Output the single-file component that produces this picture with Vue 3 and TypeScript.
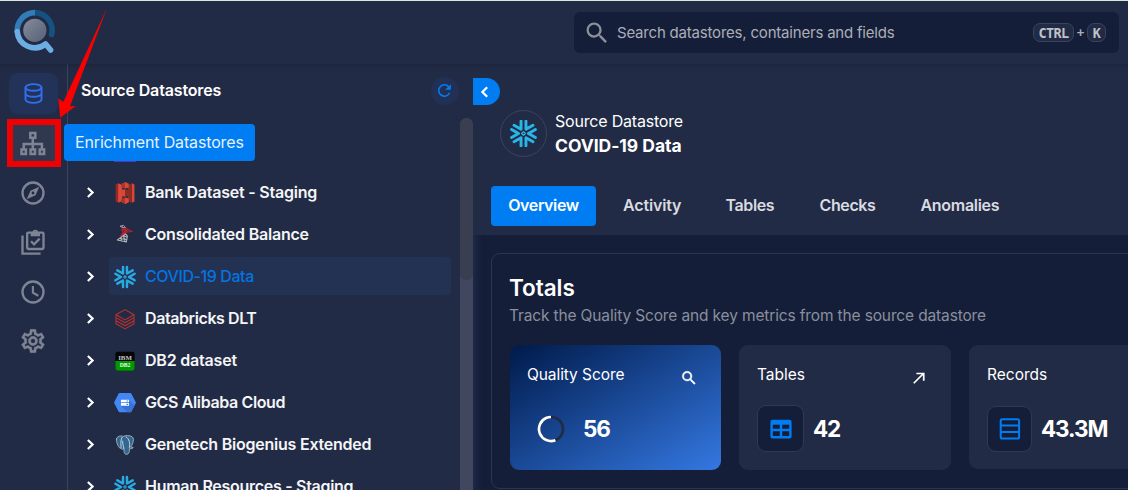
<script setup lang="ts">
type Brand = 'hidden' | 's3' | 'mssql' | 'snowflake' | 'databricks' | 'db2' | 'gcs' | 'postgres'

interface Datastore {
  name: string
  icon: Brand
  key: string
  active?: boolean
}

const datastores: Datastore[] = [
  { name: '', icon: 'hidden', key: 'first' },
  { name: 'Bank Dataset - Staging', icon: 's3', key: 'bank' },
  { name: 'Consolidated Balance', icon: 'mssql', key: 'balance' },
  { name: 'COVID-19 Data', icon: 'snowflake', key: 'covid', active: true },
  { name: 'Databricks DLT', icon: 'databricks', key: 'dlt' },
  { name: 'DB2 dataset', icon: 'db2', key: 'db2' },
  { name: 'GCS Alibaba Cloud', icon: 'gcs', key: 'gcs' },
  { name: 'Genetech Biogenius Extended', icon: 'postgres', key: 'genetech' },
  { name: 'Human Resources - Staging', icon: 'snowflake', key: 'hr' },
]

const tabs = ['Overview', 'Activity', 'Tables', 'Checks', 'Anomalies']
const petals = [0, 60, 120, 180, 240, 300]
const magnify =
  'M9.5 3A6.5 6.5 0 0 1 16 9.5c0 1.61-.59 3.09-1.56 4.23l.27.27h.79l5 5-1.5 1.5-5-5v-.79l-.27-.27A6.516 6.516 0 0 1 9.5 16 6.5 6.5 0 0 1 3 9.5 6.5 6.5 0 0 1 9.5 3m0 2C7 5 5 7 5 9.5S7 14 9.5 14 14 12 14 9.5 12 5 9.5 5z'
const cog =
  'M12 8a4 4 0 0 1 4 4 4 4 0 0 1-4 4 4 4 0 0 1-4-4 4 4 0 0 1 4-4m0 2a2 2 0 0 0-2 2 2 2 0 0 0 2 2 2 2 0 0 0 2-2 2 2 0 0 0-2-2m-2 12c-.25 0-.46-.18-.5-.42l-.37-2.65c-.63-.25-1.17-.59-1.69-.99l-2.49 1.01c-.22.08-.49 0-.61-.22l-2-3.46a.493.493 0 0 1 .12-.64l2.11-1.66L4.5 12l.07-1-2.11-1.63a.493.493 0 0 1-.12-.64l2-3.46c.12-.22.39-.31.61-.22l2.49 1c.52-.39 1.06-.73 1.69-.98l.37-2.65c.04-.24.25-.42.5-.42h4c.25 0 .46.18.5.42l.37 2.65c.63.25 1.17.59 1.69.98l2.49-1c.22-.09.49 0 .61.22l2 3.46c.13.22.07.49-.12.64L19.43 11l.07 1-.07 1 2.11 1.63c.19.15.25.42.12.64l-2 3.46c-.12.22-.39.31-.61.22l-2.49-1c-.52.39-1.06.73-1.69.98l-.37 2.65c-.04.24-.25.42-.5.42h-4m1.25-18l-.37 2.61c-1.2.25-2.26.89-3.03 1.78L5.44 7.35l-.75 1.3L6.8 10.2a5.55 5.55 0 0 0 0 3.6l-2.12 1.56.75 1.3 2.43-1.04c.77.88 1.82 1.52 3.01 1.76l.37 2.62h1.52l.37-2.61c1.19-.25 2.24-.89 3.01-1.77l2.43 1.04.75-1.3-2.12-1.55c.4-1.17.4-2.44 0-3.61l2.11-1.55-.75-1.3-2.41 1.04a5.42 5.42 0 0 0-3.03-1.77L12.75 4h-1.5z'
</script>

<template>
  <div class="app">
    <header class="topbar">
      <svg class="logo" viewBox="0 0 44 44" fill="none" stroke-width="5.6">
        <defs>
          <linearGradient id="disc" x1="0" y1="0" x2="1" y2="1">
            <stop offset="0" stop-color="#858b9a" />
            <stop offset="1" stop-color="#566076" />
          </linearGradient>
        </defs>
        <path d="M38.6 25.5A17.6 17.6 0 0 0 21.5 3.6" stroke="#15527f" stroke-linecap="round" />
        <path d="M22 3.6A17.6 17.6 0 0 0 4.4 23" stroke="#327cb7" />
        <path d="M4.2 22.5A17.6 17.6 0 0 0 32.6 35L37.6 41" stroke="#6cade3" stroke-linecap="round" stroke-linejoin="round" />
        <circle cx="21.8" cy="21.3" r="11.6" fill="url(#disc)" />
      </svg>
      <div class="search">
        <svg class="search-icon" viewBox="0 0 24 24"><path :d="magnify" fill="currentColor" /></svg>
        <span class="placeholder">Search datastores, containers and fields</span>
        <span class="keys"><kbd class="ctrl">CTRL</kbd><i class="plus">+</i><kbd class="k">K</kbd></span>
      </div>
    </header>

    <div class="body">
      <nav class="rail">
        <div class="rail-item current">
          <svg viewBox="0 0 24 24" fill="none" stroke="currentColor" stroke-width="1.9">
            <ellipse cx="12" cy="6.2" rx="7.7" ry="3.2" />
            <path d="M4.3 6.2v11.6c0 1.8 3.4 3.2 7.7 3.2s7.7-1.4 7.7-3.2V6.2M4.3 12c0 1.8 3.4 3.2 7.7 3.2s7.7-1.4 7.7-3.2" />
          </svg>
        </div>
        <div class="rail-item marked">
          <svg viewBox="0 0 28 28" fill="none" stroke="currentColor" stroke-width="2.5">
            <path d="M11.3 3.9h5v4.8h-5zM2.5 20.4h4.4v4.5H2.5zM11.6 20.4H16v4.5h-4.4zM20.7 20.4h4.4v4.5h-4.4zM13.8 9v11.5M4.7 20.5v-5.4h18.2v5.4" />
          </svg>
        </div>
        <div class="rail-item">
          <svg viewBox="0 0 24 24">
            <circle cx="12" cy="12" r="9" fill="none" stroke="currentColor" stroke-width="2" />
            <path fill="currentColor" fill-rule="evenodd" d="M6.6 17.4l3.2-7.3 7.6-3.5-3.2 7.3zM12 10.8a1.2 1.2 0 1 0 0 2.4 1.2 1.2 0 0 0 0-2.4z" />
          </svg>
        </div>
        <div class="rail-item">
          <svg viewBox="0 0 24 24" fill="none" stroke="currentColor" stroke-width="2">
            <rect x="7" y="4" width="14" height="14" rx="1" />
            <path d="M3 6.5V22h15.5" />
            <path d="M10 5.6h8" stroke-width="3" />
            <circle cx="14" cy="3.8" r="1.6" stroke-width="1.6" />
            <path d="M10.3 11.4l2.6 2.6 4.8-4.9" />
          </svg>
        </div>
        <div class="rail-item">
          <svg viewBox="0 0 24 24" fill="none" stroke="currentColor" stroke-width="2">
            <circle cx="12" cy="12" r="9" />
            <path d="M11.9 6.8v5.7l4.6 2.7" stroke-width="1.8" />
          </svg>
        </div>
        <div class="rail-item">
          <svg viewBox="0 0 24 24"><path :d="cog" fill="currentColor" stroke="currentColor" stroke-width=".3" /></svg>
        </div>
      </nav>

      <aside class="panel">
        <div class="panel-head">
          <span class="panel-title">Source Datastores</span>
          <span class="refresh">
            <svg viewBox="0 0 24 24" fill="none" stroke="currentColor" stroke-width="2.2">
              <path d="M19.2 15.2A8 8 0 1 1 18 6.8" />
              <path d="M20.9 3v8h-8z" fill="currentColor" stroke="none" />
            </svg>
          </span>
        </div>
        <div class="panel-body">
          <ul class="stores">
            <li v-for="d in datastores" :key="d.key" class="store">
              <svg v-if="d.icon !== 'hidden'" class="chev" viewBox="0 0 10 10" fill="none" stroke="currentColor" stroke-width="2"><path d="M2.6 .9L6.9 5 2.6 9.1" /></svg>
              <span v-else class="chev"></span>
              <div :class="['entry', d.key, { active: d.active }]">
                <svg class="brand" viewBox="-12 -12 24 24">
                  <rect v-if="d.icon === 'hidden'" x="-12" y="-12" width="24" height="24" fill="#5433c9" />
                  <g v-else-if="d.icon === 'snowflake'" fill="none" stroke="#29abe2" stroke-linecap="round" stroke-linejoin="round">
                    <path v-for="a in petals" :key="a" d="M10.5 -3.6L4.4 0L10.5 3.6" stroke-width="2.7" :transform="`rotate(${a})`" />
                    <path d="M0 -1.6L1.6 0L0 1.6L-1.6 0Z" stroke-width="1.1" />
                  </g>
                  <g v-else-if="d.icon === 's3'">
                    <path d="M-10.3 -9.2L-7.5 -10.6V10.6L-10.3 9.2Z" fill="#8c2c22" />
                    <path d="M-7.5 -10.6L-3 -8.6V8.6L-7.5 10.6Z" fill="#e0483a" />
                    <path d="M10.3 -9.2L7.5 -10.6V10.6L10.3 9.2Z" fill="#d9463a" />
                    <path d="M7.5 -10.6L3 -8.6V8.6L7.5 10.6Z" fill="#8c2c22" />
                    <path d="M0 -12L4 -10V-6L0 -5L-4 -6V-10Z" fill="#a8362b" />
                    <path d="M0 12L4 10V6L0 5L-4 6V10Z" fill="#a8362b" />
                    <path d="M-4 -3.4L0 -4V4L-4 3.4Z" fill="#d9463a" />
                    <path d="M0 -12L4 -10V-6L0 -5Z" fill="#d9463a" />
                    <path d="M0 -4L4 -3.4V3.4L0 4Z" fill="#8c2c22" />
                    <path d="M0 5L4 6V10L0 12Z" fill="#e0483a" />
                  </g>
                  <g v-else-if="d.icon === 'mssql'" fill="none" stroke-linejoin="round">
                    <path d="M-5.5 -9.6L-1.6 -10.6L.6 -7.8L-3 -8.3ZM-3.4 -10L-2.4 -7.8" stroke="#a9aab2" stroke-width=".9" />
                    <path d="M-3.6 -6.6L1 -7L7.8 -3.8L1.3 -3L-5.4 2.4L-2.4 -2.6ZM-1 -6.4L2.8 -3.2M3.4 -5.8L-2.2 -2M1.2 -6.6L-3.8 .8M-3 -6.4L1 -3" stroke="#b0232c" stroke-width="1.2" />
                    <path d="M-4 2.4L.6 -1.2L2.6 1L1.6 7.6L-8.4 5.4ZM-6 3.8L2 5M-1.8 .6L.2 7.4M-4 2.6L-4.2 6.3M-1.8 .6L2.2 2.4" stroke="#b4b6be" stroke-width="1.1" />
                  </g>
                  <g v-else-if="d.icon === 'databricks'" fill="none" stroke="#c0312b" stroke-width="1.15" stroke-linejoin="round">
                    <path d="M-9.8 -4.7L0 -10.2L9.8 -4.7L0 1Z" />
                    <path d="M-9.8 -4.7V-1.5L0 4L9.8 -1.5V-4.7M-9.8 -1.3V2L0 7.3L9.8 2V-1.3M-9.8 2V5.2L0 10.8L9.8 5.2V2" />
                  </g>
                  <g v-else-if="d.icon === 'db2'">
                    <rect x="-10.5" y="-10" width="21" height="20.5" rx="2.6" fill="#050505" />
                    <path d="M-10.5 0H10.5V7.9A2.6 2.6 0 0 1 7.9 10.5H-7.9A2.6 2.6 0 0 1 -10.5 7.9Z" fill="#009a00" />
                    <text x="0" y="-1.5" class="ibm">IBM</text>
                    <text x="0" y="7" class="db">DB2</text>
                  </g>
                  <g v-else-if="d.icon === 'gcs'">
                    <path d="M-6 -10.8H6Q6.6 -10.8 7 -10L11.7 -1Q12 -.4 11.7 .2L7 9.2Q6.6 10 6 10H-6Q-6.6 10 -7 9.2L-11.7 .2Q-12 -.4 -11.7 -1L-7 -10Q-6.6 -10.8 -6 -10.8Z" fill="#4386f5" />
                    <path d="M4.4 -3.4L10.4 2.6L7 9.2Q6.6 10 6 10H2.4L-4.4 3Z" fill="#3a72d6" />
                    <path d="M-4.4 -3.5H4.4V-.7H-4.4ZM-4.4 .1H4.4V2.9H-4.4Z" fill="#fff" />
                    <path d="M1.6 -2.1H3.4M1.6 1.5H3.4" stroke="#4386f5" stroke-width="1.1" />
                  </g>
                  <g v-else stroke-linejoin="round" stroke-linecap="round">
                    <path d="M-9.3 -6.5C-8.8 -10 -4.5 -10.4 -2 -9.4C1 -10.8 9 -11 9.2 -6.2C9.2 -3 7.6 .6 6.2 2.2L9 2.7C7.8 4.4 5.4 4.2 4.8 4C4.9 7.4 4.4 10 1.8 10.2C-.8 10.4 -1.2 7.4 -1.1 4.2C-3 5.2 -4.2 4.4 -4.4 3.6C-6.6 4.6 -9.8 -3 -9.3 -6.5Z" fill="#336791" stroke="#aebac6" stroke-width=".9" />
                    <path d="M-3.2 -8.4C-5 -5 -4.6 -1.4 -4.2 3M1.2 -8.8C4.6 -7 5.8 -1.8 4.8 2.6M-1.2 3.8C-1.6 .8 -2.8 -1.2 -2.6 -4.2" fill="none" stroke="#dfe6ec" stroke-width=".9" />
                  </g>
                </svg>
                <span class="name">{{ d.name }}</span>
              </div>
            </li>
          </ul>
          <div class="track"><div class="thumb"></div></div>
        </div>
      </aside>

      <main class="main">
        <section class="hero">
          <div class="ident">
            <div class="avatar">
              <svg viewBox="-12 -12 24 24" fill="none" stroke="#29b5e8" stroke-linecap="round" stroke-linejoin="round">
                <path v-for="a in petals" :key="a" d="M10.6 -3.6L4.4 0L10.6 3.6" stroke-width="2.6" :transform="`rotate(${a})`" />
                <path d="M0 -1.7L1.7 0L0 1.7L-1.7 0Z" stroke-width="1.1" />
              </svg>
            </div>
            <div class="ident-text">
              <span class="kind">Source Datastore</span>
              <span class="title">COVID-19 Data</span>
            </div>
          </div>
          <div class="tabs">
            <div v-for="(t, i) in tabs" :key="t" :class="['tab', t.toLowerCase(), { on: i === 0 }]"><span>{{ t }}</span></div>
          </div>
        </section>
        <section class="totals">
          <h2>Totals</h2>
          <p>Track the Quality Score and key metrics from the source datastore</p>
          <div class="cards">
            <div class="card score">
              <div class="card-head">
                <span class="l-score">Quality Score</span>
                <svg class="corner" viewBox="0 0 24 24"><path :d="magnify" fill="currentColor" stroke="currentColor" stroke-width=".5" /></svg>
              </div>
              <div class="card-row">
                <svg class="ring" viewBox="0 0 28 28" fill="none" stroke-width="2.7">
                  <circle cx="14" cy="14" r="12" stroke="#222b45" />
                  <circle cx="14" cy="14" r="12" stroke="#fff" pathLength="100" stroke-dasharray="56 44" transform="rotate(68.4 14 14)" />
                </svg>
                <b class="v-score">56</b>
              </div>
            </div>
            <div class="card">
              <div class="card-head">
                <span class="l-tables">Tables</span>
                <svg class="corner" viewBox="0 0 24 24" fill="none" stroke="currentColor" stroke-width="2.3"><path d="M5 19L18 6M8.5 6H18.3V15.5" /></svg>
              </div>
              <div class="card-row">
                <span class="tile">
                  <svg viewBox="0 0 22 20" fill="none" stroke="currentColor" stroke-width="2.4">
                    <rect x="1.6" y="2" width="18.8" height="16.2" rx="1" />
                    <path d="M1.6 3.5h18.8" stroke-width="4.4" />
                    <path d="M11 4v14M2 11h18.5" />
                  </svg>
                </span>
                <b class="v-tables">42</b>
              </div>
            </div>
            <div class="card records">
              <div class="card-head"><span class="l-records">Records</span></div>
              <div class="card-row">
                <span class="tile">
                  <svg viewBox="0 0 22 22" fill="none" stroke="currentColor" stroke-width="2">
                    <rect x="1.7" y="1.2" width="18.4" height="19.4" rx="1.6" />
                    <path d="M1.7 7.6h18.4M1.7 14.1h18.4" />
                  </svg>
                </span>
                <b class="v-records">43.3M</b>
              </div>
            </div>
          </div>
        </section>
      </main>
    </div>

    <div class="collapse">
      <svg viewBox="0 0 12 12" fill="none" stroke="currentColor" stroke-width="2.2"><path d="M8.2 1.2L3.4 6l4.8 4.8" /></svg>
    </div>
    <div class="tooltip">Enrichment Datastores</div>
    <div class="highlight"></div>
    <svg class="arrow" viewBox="0 0 120 125"><path d="M107 8L70 106.3L75.8 106L60.2 117.7L58.2 98.6L63.4 101.8Z" fill="#fb0000" /></svg>
  </div>
</template>

<style>
body { background: #151e39; }
</style>

<style scoped>
* { box-sizing: border-box; }
.app {
  position: relative; width: 1128px; height: 490px; overflow: hidden;
  background: #151e39; color: #fff; display: flex; flex-direction: column;
  font-family: Inter, "Noto Sans", sans-serif; font-size: 16px; white-space: nowrap;
}
svg { display: block; flex: none; }

.topbar {
  flex: none; height: 64px; border-top: 1px solid #dbe6df; background: #222b45;
  display: flex; justify-content: space-between; padding: 8px 9px 0 13px;
  position: relative; z-index: 2; box-shadow: 0 1px 5px rgba(15, 20, 35, .35);
}
.logo { width: 44px; height: 44px; }
.search {
  margin-top: 3px; width: 545px; height: 41px; border-radius: 6px; background: #151e39;
  display: flex; align-items: center; padding: 0 13px 0 9px; color: #abaeb7;
}
.search-icon { width: 28px; height: 28px; color: #8c909c; }
.placeholder { margin-left: 6px; font-size: 15px; letter-spacing: -.2px; flex: 1; }
.keys { display: flex; align-items: center; }
kbd {
  height: 19px; display: flex; align-items: center; justify-content: center;
  border: 1px solid #3b435b; border-radius: 7px; background: #222b45; color: #c0c2c9;
  font: bold 13.5px "DejaVu Sans Mono", monospace; letter-spacing: -.6px;
}
.ctrl { width: 41px; }
.k { width: 19px; }
.plus { width: 13px; text-align: center; font: bold 12.5px "DejaVu Sans Mono", monospace; }

.body { flex: 1; display: flex; min-height: 0; }
.rail {
  width: 68px; flex: none; background: #222b45; border-right: 1px solid #3b435b;
  padding: 9px 0 0 9px;
}
.rail-item { width: 49px; height: 41px; margin-bottom: 8.5px; display: flex; align-items: center; justify-content: center; color: #7e8494; }
.rail-item svg { width: 28px; height: 28px; margin-right: 1px; }
.rail-item.current { background: #223258; border-radius: 9px; color: #2f6fee; }
.rail-item.current svg { width: 25px; height: 25px; }
.rail-item.marked { background: #30384f; }

.panel { width: 405px; flex: none; background: #222b45; display: flex; flex-direction: column; }
.panel-head { flex: none; height: 54px; display: flex; justify-content: space-between; align-items: center; padding: 0 14px 0 13px; }
.panel-title { font-weight: 600; font-size: 16px; letter-spacing: -.15px; margin-top: -2px; }
.refresh { width: 28px; height: 28px; border-radius: 50%; background: #223055; color: #007df2; display: flex; align-items: center; justify-content: center; }
.refresh svg { width: 17px; height: 17px; margin: 0 1px 1px 0; }
.panel-body { flex: 1; min-height: 0; display: flex; justify-content: space-between; overflow: hidden; }
.stores { list-style: none; margin: 0; padding: 11px 0 0 16px; }
.store { display: flex; align-items: center; height: 42px; }
.chev { width: 13px; height: 11px; margin-right: 12px; flex: none; }
.entry { width: 342px; height: 38px; border-radius: 4px; display: flex; align-items: center; padding-left: 5px; color: #f4f5f7; }
.brand { width: 22px; height: 22px; overflow: visible; position: relative; top: 1px; }
.name { margin-left: 9px; font-weight: 600; font-size: 16px; letter-spacing: -.23px; }
.balance .name { letter-spacing: -.21px; }
.dlt .name { letter-spacing: -.41px; }
.db2 .name { letter-spacing: -.2px; }
.gcs .name { letter-spacing: -.37px; }
.hr .name { letter-spacing: -.29px; }
.entry.active { background: #233153; color: #0574e0; }
.entry.active .name { font-weight: 500; letter-spacing: -.42px; }
.ibm { font: bold 7.5px "Liberation Serif", serif; fill: #c5c5c5; text-anchor: middle; }
.db { font: bold 6.2px "Liberation Serif", serif; fill: #eaffea; text-anchor: middle; }
.track { width: 13px; background: #41475f; border-radius: 7px 7px 0 0; overflow: hidden; }
.thumb { height: 162px; background: #393e50; border-radius: 0 0 6px 6px; }

.main { flex: 1; min-width: 0; overflow: hidden; box-shadow: inset 8px 0 8px -6px #232f50; }
.hero { height: 171px; background: #222b45; padding: 46px 0 0 18px; }
.ident { display: flex; padding-left: 9px; height: 76px; }
.avatar { width: 47px; height: 47px; border: 1px solid #3c445b; border-radius: 50%; display: flex; align-items: center; justify-content: center; }
.avatar svg { width: 27px; height: 27px; }
.ident-text { margin-left: 8px; display: flex; flex-direction: column; }
.kind { font-size: 16px; line-height: 22px; letter-spacing: -.2px; }
.title { font-size: 17.5px; line-height: 28px; font-weight: 700; letter-spacing: -.03px; }
.tabs { display: flex; }
.tab { height: 40px; display: flex; align-items: center; padding-bottom: 2px; font-weight: 600; font-size: 16px; letter-spacing: -.38px; color: #d9dbe0; }
.tab.overview { width: 105px; justify-content: center; background: #007df2; border-radius: 4px; color: #fff; }
.tab.activity { margin-left: 27px; width: 102.5px; letter-spacing: -.15px; }
.tab.tables { width: 94px; }
.tab.checks { width: 101px; }
.tab.anomalies { letter-spacing: -.3px; }

.totals { margin: 18px -40px 0 18px; height: 236px; border: 1px solid #2c3550; border-radius: 9px; padding: 19px 0 0 18px; }
h2 { margin: 0 0 0 -1px; font-size: 22.5px; line-height: 30px; font-weight: 600; letter-spacing: -.05px; }
p { margin: 2px 0 0 -1px; font-size: 15.5px; line-height: 22px; color: #8a8f9c; letter-spacing: -.14px; }
.cards { display: flex; gap: 18px; margin-top: 18px; }
.card { width: 212px; height: 125px; flex: none; border-radius: 9px; background: #222b45; padding: 17px 18px 0; }
.score { width: 211px; background: linear-gradient(to bottom right, #001a4a, #3478e2); }
.records { height: 124px; }
.card-head { display: flex; justify-content: space-between; height: 43px; font-size: 15.5px; line-height: 26px; }
.l-score { margin-left: -1px; letter-spacing: -.08px; }
.corner { width: 18px; height: 18px; margin: 7px 5px 0 0; }
.card-row { display: flex; align-items: center; height: 47px; }
.card-row b { font-size: 22.5px; font-weight: 700; letter-spacing: -1.1px; margin-top: -1px; }
.tile { width: 47px; height: 47px; border: 1px solid #303952; border-radius: 9px; background: #151e39; color: #007df2; display: flex; align-items: center; justify-content: center; }
.tile svg { width: 22px; }
.records .tile { width: 45px; height: 46px; }
.ring { width: 28px; height: 28px; margin-left: 9px; }
.card-row .v-score { margin-left: 18px; }
.card-row .v-tables, .card-row .v-records { margin-left: 9px; }

.collapse { position: absolute; z-index: 3; left: 473px; top: 78px; width: 27px; height: 27px; background: #007df2; border-radius: 0 14px 14px 0; display: flex; align-items: center; padding-left: 6px; }
.collapse svg { width: 12px; height: 12px; }
.tooltip { position: absolute; z-index: 3; left: 64px; top: 124px; width: 191px; height: 37px; line-height: 37px; padding-left: 11px; border-radius: 4px; background: #007df2; font-size: 16px; letter-spacing: -.15px; color: #e6f1fd; }
.highlight { position: absolute; z-index: 4; left: 7px; top: 119px; width: 54px; height: 48px; border: 6px solid #f00000; }
.arrow { position: absolute; z-index: 5; left: 0; top: 0; width: 120px; height: 125px; }
</style>
